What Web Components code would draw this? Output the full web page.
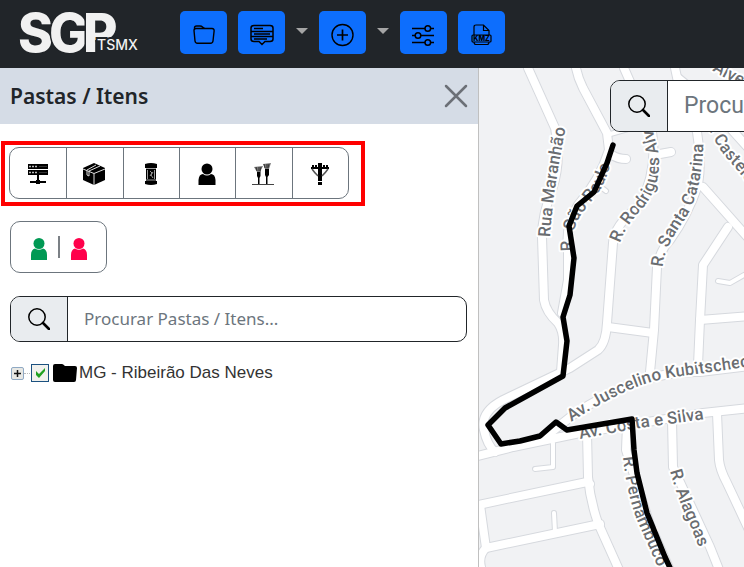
<!DOCTYPE html>
<html lang="pt-BR">
<head>
<meta charset="utf-8">
<title>SGP TSMX</title>
<style>
html,body{height:100%}
body{margin:0;font-family:"Noto Sans","Open Sans",sans-serif;color:#212529;background:#fff}
</style>
</head>
<body>
<sgp-app></sgp-app>
<script>
const define=(name,html)=>customElements.define(name,class extends HTMLElement{
  constructor(){super();const t=document.createElement('template');t.innerHTML=html;
    this.attachShadow({mode:'open'}).append(t.content.cloneNode(true));}
  connectedCallback(){
    const c=this.shadowRoot.querySelector('button,input');
    if(c&&this.getAttribute('label'))c.setAttribute('aria-label',this.getAttribute('label'));
    if(c&&this.hasAttribute('placeholder'))c.placeholder=this.getAttribute('placeholder');
  }
});

define('sgp-logo',`<style>:host{display:block;flex:none}svg{display:block}</style>
<svg width="124" height="48" viewBox="16 10 124 48" fill="#f1f1f1" stroke="#212529" paint-order="stroke" role="img" aria-label="SGP TSMX">
<text font-family="Inter,sans-serif" font-weight="800" font-size="53" stroke-width="3" y="52"><tspan x="18">S</tspan><tspan x="49">G</tspan><tspan x="83">P</tspan></text>
<text font-family="Inter,sans-serif" font-weight="500" font-size="14" stroke-width="4" x="97" y="50">TSMX</text>
</svg>`);

define('tool-button',`<style>
:host{display:block}
button{display:grid;place-items:center;width:47px;height:43px;padding:4px 0 0;border:0;border-radius:5px;background:#0d6efd;color:#000}
::slotted(svg){display:block}
</style><button><slot></slot></button>`);

define('caret-button',`<style>
:host{display:block}
button{display:block;border:0;background:none;padding:0;margin:0 0 4px;width:12px;height:6px}
svg{display:block}
</style><button><svg width="12" height="6"><path d="M0 0H12L6 6Z" fill="#a5a5a5"/></svg></button>`);

define('top-bar',`<style>
:host{display:block;background:#212529;flex:none}
header{display:flex;align-items:center;height:68px;padding:0 16px;box-sizing:border-box}
nav{display:flex;align-items:center;gap:11px;margin:0 0 3px 40px}
</style>
<header><sgp-logo></sgp-logo><nav>
<tool-button label="Pastas"><svg width="22" height="22" viewBox="0 0 22 22" fill="none" stroke="#000" stroke-width="1.4"><path d="M1.500 6V4Q1.500 2 3.500 2H7Q8.500 2 9.500 3T12 4.500H19Q21.400 4.700 21.100 7L20 17Q19.700 19.200 17.600 19.200H4.400Q2.300 19.200 2 17L1 6.500Q1 4.500 3 4.500H12"/></svg></tool-button>
<tool-button label="Mensagens"><svg width="24" height="24" viewBox="0 0 24 24" fill="none" stroke="#000" stroke-width="1.5"><path d="M4 2.500H20Q23 2.500 23 5V16Q23 18.500 20 18.500H15L12 21.500L9 18.500H4Q1 18.500 1 16V5Q1 2.500 4 2.500ZM1 8.500H23M1 13.500H23M4 5.500H13M4 11H20M4 16H17"/></svg></tool-button>
<caret-button label="Mais mensagens"></caret-button>
<tool-button label="Adicionar"><svg width="24" height="24" viewBox="0 0 24 24" fill="none" stroke="#000" stroke-width="1.400"><circle cx="11.500" cy="12" r="10.500"/><path d="M6 12H17M11.500 6.500V17.500" stroke-width="1.700"/></svg></tool-button>
<caret-button label="Mais opções"></caret-button>
<tool-button label="Configurações"><svg width="24" height="24" viewBox="0 0 24 24" fill="none" stroke="#000" stroke-width="1.500"><path d="M0 5.500H13M18.500 5.500H22M0 12.500H3M9 12.500H22M0 19.500H13M18.500 19.500H22"/><circle cx="15.800" cy="5.500" r="2.800"/><circle cx="6" cy="12.500" r="2.800"/><circle cx="15.800" cy="19.500" r="2.800"/></svg></tool-button>
<tool-button label="Exportar KMZ"><svg width="22" height="22" viewBox="0 0 22 22" fill="none" stroke="#000" stroke-width="1.200"><path d="M3 11V3Q3 1 5 1H12.500L18 6.500V11M12.500 1V6.500H18M3 18Q3 20.500 5 20.500H16Q18 20.500 18 18"/><rect x="1" y="11" width="19" height="7" rx="1"/><text x="10.500" y="17" text-anchor="middle" font-family="Inter,sans-serif" font-weight="800" font-size="7" fill="#000" stroke="none">KMZ</text></svg></tool-button>
</nav></header>`);

define('group-button',`<style>
:host{display:block;border-left:1px solid #6c757d}
:host(:first-child){border-left:0}
button{display:grid;place-items:center;width:100%;height:50px;padding:2px 1px 0 0;border:0;background:none}
</style><button><slot></slot></button>`);

define('item-toolbar',`<style>
:host{display:block;width:fit-content;margin-left:1px;border:4px solid #f00;padding:2px 12px 3px 4px}
div{display:grid;grid-template-columns:repeat(6,1fr);width:338px;border:1px solid #6c757d;border-radius:10px}
svg{display:block}
</style><div role="group" aria-label="Itens">
<group-button label="Servidor"><svg width="22" height="22"><path d="M1 1H21V6H1ZM1 7H21V12H1ZM10 12H12V18H10ZM3 18H19V20H3ZM9 17H13V21H9Z"/><path d="M2 3.500H4M5 3.500H7M8 3.500H10M2 9.500H4M5 9.500H7M8 9.500H10" stroke="#bbb" stroke-width="1.500"/><path d="M12 3.500H20M12 9.500H20" stroke="#333"/></svg></group-button>
<group-button label="Caixa"><svg width="22" height="22"><path d="M11 0L22 5V17L11 22L0 17V5Z"/><path d="M0 6L11 10.500L22 6M11 10.500V22M4 8V12L6 13V8L17 3M4 7L13 2" stroke="#ddd" fill="none" stroke-width="1"/></svg></group-button>
<group-button label="Caixa de emenda"><svg width="22" height="22"><path d="M5 1Q11-1 17 1V5H5ZM5 18H17V21Q11 23 5 21Z"/><path d="M6 4H16V18H6Z"/><path d="M6 5.500H16M6 17H16M7.500 7V16M14.500 7V16M10 8L12 10L10 13M13 9L11 12L13 15" fill="none" stroke="#999"/></svg></group-button>
<group-button label="Cliente"><svg width="18" height="22"><circle cx="9" cy="6" r="5.500"/><path d="M.5 22V17Q1 11 5 11Q9 14 13 11Q17 11 17.500 17V22Z"/></svg></group-button>
<group-button label="Fibras"><svg width="24" height="22"><path d="M1 21.500H23" stroke="#444"/><path d="M6 7H9.500V13L8.500 15V21H7V15L6 13ZM14 5H18V12L16.500 14V21H15V14L14 12Z"/><path d="M3 4L12 3L9 9H6ZM12 1L20 0L18 6H14Z" fill="#777"/><path d="M6 8L5 4M8 8L8 4M9 8L10 4M14 5L13 1M16 5L16 1M17 5L18 1" stroke="#333"/></svg></group-button>
<group-button label="Poste"><svg width="22" height="22"><path d="M9 0H13V18H9ZM9 19H13V22H9ZM2 4H20V6H2ZM3 2H5V4H3ZM6 2H8V4H6ZM14 2H16V4H14ZM17 2H19V4H17Z"/><path d="M3 6Q5 9 9 13M19 6Q17 9 13 13" fill="none" stroke="#555" stroke-width="1.500"/></svg></group-button>
</div>`);

define('status-filter',`<style>
:host{display:block;margin:15px 0 0 10px}
button{display:flex;align-items:center;justify-content:center;gap:10px;width:97px;height:52px;padding:0;border:1px solid #6c757d;border-radius:10px;background:#fff}
i{width:2px;height:22px;background:#7b8085}
svg{display:block;margin-top:4px}
</style><button aria-label="Filtrar clientes"><svg width="18" height="22" fill="#009954"><circle cx="9" cy="5.500" r="5.500"/><path d="M1 22V17Q1 11.500 5 10.500Q9 13 13 10.500Q17 11.500 17 17V22Z"/></svg><i></i><svg width="18" height="22" fill="#ff004b"><circle cx="9" cy="5.500" r="5.500"/><path d="M1 22V17Q1 11.500 5 10.500Q9 13 13 10.500Q17 11.500 17 17V22Z"/></svg></button>`);

define('search-field',`<style>
:host{display:block;height:46px;font-size:17px}
label{display:flex;box-sizing:border-box;height:100%;border:1px solid #212529;border-radius:10px;background:#fff;overflow:hidden}
span{display:grid;place-items:center;flex:none;width:56px;background:#e9ecef;border-right:1px solid #212529}
input{flex:1;min-width:0;border:0;outline:0;padding:0 16px 2px;background:none;font:inherit;color:#212529}
input::placeholder{color:#6c757d;opacity:1}
</style><label><span><svg width="22" height="22" viewBox="0 0 22 22" fill="none" stroke="#000"><circle cx="9" cy="9" r="8.200" stroke-width="1.500"/><path d="M15 15L21 21" stroke-width="2.600" stroke-linecap="round"/></svg></span><input type="text"></label>`);

define('folder-tree',`<style>
:host{display:block;margin:21px 0 0 11px;font:17px "Liberation Sans",Arial,sans-serif;color:#333}
div{display:flex;align-items:center}
button{display:grid;place-items:center;width:13px;height:13px;padding:0;border:1px solid #8fa9c4;border-radius:2px;background:#e8e8e4}
i{width:6px;margin-right:1px;border-top:1px dotted #bbb}
label{display:flex;align-items:center}
input{appearance:none;width:18px;height:18px;margin:0 4px 0 0;border:1px solid #1c5180;background:#f1f1ed url("data:image/svg+xml,%3Csvg xmlns='http://www.w3.org/2000/svg' viewBox='0 0 16 16'%3E%3Cpath d='M4 6V10L7 13L13 6V3L7 9Z' fill='%2321a121'/%3E%3C/svg%3E")}
svg{display:block}
label svg{margin-right:2px}
</style><div role="treeitem"><button aria-label="Expandir"><svg width="9" height="9"><path d="M1 4.500H8M4.500 1V8" stroke="#111" stroke-width="1.500"/></svg></button><i></i><label><input type="checkbox" checked><svg width="24" height="18"><path d="M0 2Q0 0 2 0H9Q10 0 12 2H22Q24 2 24 4L23 16Q23 18 21 18H2Q0 18 0 16Z"/></svg>MG - Ribeirão Das Neves</label></div>`);

define('side-panel',`<style>
:host{display:block;flex:0 1 478px;max-width:65%;border-right:1px solid #c0c0c0;background:#fff}
header{display:flex;align-items:center;justify-content:space-between;height:56px;padding:0 10px;background:#d5dce6}
h1{margin:0;font-size:21px;font-weight:600;color:#212529}
header button{display:block;padding:0;border:0;background:none}
svg{display:block}
main{padding-top:17px}
search-field{margin:23px 11px 0 10px}
</style><header><h1>Pastas / Itens</h1><button aria-label="Fechar"><svg width="24" height="24"><path d="M2 2L22 22M22 2L2 22" stroke="#6c7077" stroke-width="2.500" stroke-linecap="round"/></svg></button></header>
<main><item-toolbar></item-toolbar><status-filter></status-filter><search-field label="Procurar Pastas / Itens" placeholder="Procurar Pastas / Itens..."></search-field><folder-tree></folder-tree></main>`);

const big=['M528 68L555 128Q562 160 552 190Q542 215 542 237L544 300Q546 312 558 323Q564 332 563 345L561 372','M576 68Q578 78 583 88L607 133L609 150Q600 180 578 205Q565 225 568 250L568 280L562 313','M624 68L652 132Q658 170 640 205Q614 225 613 243L607 323Q606 343 598 350L570 368L503 400Q480 412 484 430Q487 445 495 452','M675 68L678 82L697 132Q702 160 698 185Q688 215 670 240Q660 250 657 267L654 330L650 372','M612 155Q618 159 626 159','M660 154L671 152','M608 327L653 333','M703 187L750 240','M728 227L703 265L700 320L698 365','M700 320L750 316','M678 78L705 100L750 150','M545 437L573 415Q640 370 700 372L750 366','M478 456L513 447L580 433L703 413L750 408','M587 433L588 477Q590 500 598 523L620 572','M478 505L587 482L590 484','M480 505L486 548L600 524','M486 548Q478 556 481 567','M627 425L626 450L650 525L672 575','M672 420L673 467L710 547L720 572','M717 413L719 460Q720 470 727 483L750 532'];
const small=['M607 135L628 129','M598 185L606 191','M718 281L730 283L744 275','M553 443L553 467L535 469','M554 513L555 532'];
const labels=[['Rua Maranhão','M550 237Q553 190 566 127'],['R. São Paulo','M573 251Q570 230 583 212L600 190Q612 170 614 140'],['R. Rodrigues Alv','M620 243Q626 225 643 208Q665 180 657 146L645 100'],['R. Santa Catarina','M663 267Q663 250 683 222Q706 190 703 120'],['Alves','M712 70Q724 78 736 83L780 108'],['R. Castelo','M705 120Q716 148 733 165L775 217'],['Av. Juscelino Kubitscheck','M571 422Q630 384 668 378L790 361'],['Av. Costa e Silva','M580 439L640 428L720 417'],['R. Pernambuco','M623 457Q626 490 637 520L668 590'],['R. Alagoas','M670 471Q678 500 690 525L710 575']];
define('street-map',`<style>
:host{display:block;flex:1;min-width:0;position:relative;overflow:hidden;background:#f1f2f4}
svg{position:absolute;inset:0;width:100%;height:100%}
text{font:500 17px Roboto,sans-serif;fill:#6a6d71;stroke:#fff;stroke-width:4px;paint-order:stroke;stroke-linejoin:round}
search-field{position:absolute;left:131px;top:12px;width:460px;height:52px;font:23px Roboto,sans-serif}
</style><svg role="img" aria-label="Mapa"><g transform="translate(-479 -68)" fill="none" stroke-linejoin="round" stroke-linecap="round">
<g stroke="#d6d9de">${big.map(d=>`<path d="${d}" stroke-width="10"/>`).join('')}${small.map(d=>`<path d="${d}" stroke-width="6"/>`).join('')}</g>
<g stroke="#fff">${big.map(d=>`<path d="${d}" stroke-width="8"/>`).join('')}${small.map(d=>`<path d="${d}" stroke-width="4"/>`).join('')}</g>
${labels.map(([t,d],i)=>`<path id="street${i}" d="${d}"/><text><textPath href="#street${i}">${t}</textPath></text>`).join('')}
<path d="M613 145L607 163L594 192L577 206L569 226L574 258L570 295L563 317L567 341L563 376L505 408L488 425L501 444L520 441L540 436L556 422L567 430L632 419L634 450L637 473L647 513L665 557L672 572" stroke="#000" stroke-width="5.500"/>
</g></svg><search-field label="Procurar no mapa" placeholder="Procurar no mapa"></search-field>`);

define('sgp-app',`<style>
:host{display:flex;flex-direction:column;min-height:100%;height:100%}
section{display:flex;flex:1;min-height:0}
</style><top-bar></top-bar><section><side-panel></side-panel><street-map></street-map></section>`);
</script>
</body>
</html>
